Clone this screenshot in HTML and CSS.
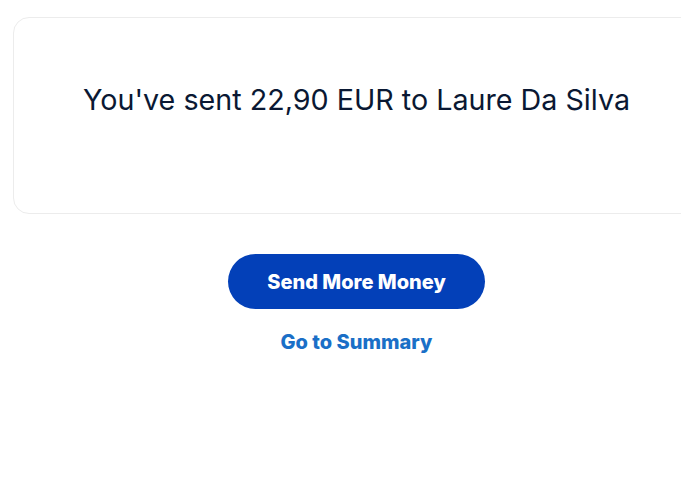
FILE: index.html
```html
<!DOCTYPE html>
<html lang="en">
<head>
<meta charset="utf-8">
<title>Sent</title>
<link rel="stylesheet" href="styles.css">
</head>
<body>
<main class="page">
  <section class="card">
    <h1 class="title">You've sent 22,90 EUR to Laure Da Silva</h1>
  </section>
  <div class="actions">
    <button class="btn-primary" type="button">Send More Money</button>
    <a class="link" href="#">Go to Summary</a>
  </div>
</main>
</body>
</html>
```

FILE: styles.css
```css
html, body {
  margin: 0;
  padding: 0;
  background: #ffffff;
  overflow: hidden;
}
body {
  font-family: Inter, "Liberation Sans", sans-serif;
}
.page {
  width: 687px;
  margin-left: 13px;
  padding-top: 17px;
  display: flex;
  flex-direction: column;
  align-items: center;
}
.card {
  box-sizing: border-box;
  width: 100%;
  height: 197px;
  padding-top: 64px;
  border: 1px solid #ececec;
  border-radius: 16px;
  display: flex;
  justify-content: center;
  align-items: flex-start;
}
.title {
  margin: 0;
  font-size: 28.7px;
  font-weight: 400;
  color: #0a1833;
  letter-spacing: 0;
}
.actions {
  margin-top: 40px;
  display: flex;
  flex-direction: column;
  align-items: center;
  gap: 21px;
}
.btn-primary {
  width: 257px;
  height: 55px;
  border: none;
  border-radius: 28px;
  background: #0340b8;
  color: #ffffff;
  font-family: Inter, "Liberation Sans", sans-serif;
  font-size: 20px;
  font-weight: 800;
}
.link {
  color: #1a6fc7;
  font-size: 20px;
  font-weight: 800;
  text-decoration: none;
}
```
